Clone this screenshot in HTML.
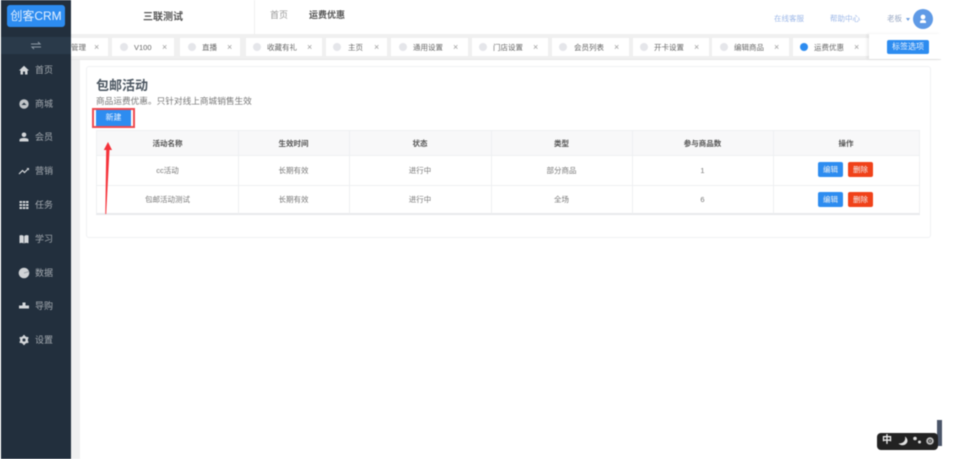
<!DOCTYPE html>
<html lang="zh"><head><meta charset="utf-8"><style>
html,body{margin:0;padding:0;background:#fff}
#p{position:relative;width:954px;height:459px;overflow:hidden;background:#fff;font-family:"Liberation Sans","Noto Sans CJK SC",sans-serif;filter:blur(.45px)}
#p div,#p span.a,#p svg{position:absolute}
.t{white-space:nowrap;line-height:1}
.tab{top:38px;height:18px;background:#fff}
.tab .l{top:5px;font-size:7.5px;color:#666;white-space:nowrap;line-height:9px}
.tab .d{top:5px;width:8px;height:8px;border-radius:50%;background:#e5e6ea}
.tab .x{top:4px;font-size:9px;color:#9a9a9a;line-height:10px}
.m{left:35px;font-size:9px;color:#a5abb1;line-height:10px;white-space:nowrap}
.c{font-size:7.5px;color:#777;text-align:center;line-height:8px;white-space:nowrap}
.h{font-size:7.5px;color:#555;font-weight:bold;text-align:center;line-height:8px;white-space:nowrap;top:140px}
.v{width:1px;top:130px;height:84px;background:#eef0f2}
.b{width:25px;height:15px;border-radius:2px;color:#f3f3f3;font-size:7.5px;line-height:15px;text-align:center}
</style></head><body><div id="p">
<!-- backgrounds -->
<div style="left:71px;top:60px;width:9px;height:399px;background:#f0f0f0"></div>
<div style="left:0;top:0;width:1px;height:459px;background:#fff"></div>
<div style="left:71px;top:34px;width:870px;height:26px;background:#f0f0f0"></div>
<div style="left:71px;top:59px;width:870px;height:1px;background:#e8e8e8"></div>
<!-- top bar -->
<div style="left:254px;top:0;width:1px;height:34px;background:#efefef"></div>
<div class="t" style="left:143px;top:13px;font-size:10px;font-weight:bold;color:#555">三联测试</div>
<div class="t" style="left:270px;top:11px;font-size:9px;color:#999">首页</div>
<div class="t" style="left:309px;top:11px;font-size:9px;font-weight:bold;color:#555">运费优惠</div>
<div class="t" style="left:774px;top:15px;font-size:7.5px;color:#9db8e8">在线客服</div>
<div class="t" style="left:830px;top:15px;font-size:7.5px;color:#9db8e8">帮助中心</div>
<div class="t" style="left:887px;top:15px;font-size:7.5px;color:#9aa9c4">老板</div>
<div style="left:906px;top:18px;width:0;height:0;border:2px solid transparent;border-top:3px solid #6f9fe0"></div>
<div style="left:913px;top:9px;width:20px;height:20px;border-radius:50%;background:#5f9ae6"></div>
<svg style="left:918px;top:14px" width="10" height="10" viewBox="0 0 10 10"><circle cx="5" cy="3" r="2.4" fill="#fff"/><path d="M2 9V8C2 6.500 3 6 5 6s3 .5 3 2v1z" fill="#fff"/></svg>
<!-- tabs -->
<div class="tab" style="left:71px;width:37px"><span class="a l" style="left:0">管理</span><span class="a x" style="left:23px">×</span></div>
<div class="tab" style="left:112px;width:62px"><span class="a d" style="left:8px"></span><span class="a l" style="left:22px">V100</span><span class="a x" style="left:50px">×</span></div>
<div class="tab" style="left:180px;width:60px"><span class="a d" style="left:8px"></span><span class="a l" style="left:22px">直播</span><span class="a x" style="left:47px">×</span></div>
<div class="tab" style="left:246px;width:76px"><span class="a d" style="left:7px"></span><span class="a l" style="left:21px">收藏有礼</span><span class="a x" style="left:61px">×</span></div>
<div class="tab" style="left:326px;width:61px"><span class="a d" style="left:7px"></span><span class="a l" style="left:22px">主页</span><span class="a x" style="left:48px">×</span></div>
<div class="tab" style="left:391px;width:77px"><span class="a d" style="left:8px"></span><span class="a l" style="left:22px">通用设置</span><span class="a x" style="left:62px">×</span></div>
<div class="tab" style="left:472px;width:76px"><span class="a d" style="left:7px"></span><span class="a l" style="left:21px">门店设置</span><span class="a x" style="left:61px">×</span></div>
<div class="tab" style="left:552px;width:77px"><span class="a d" style="left:7px"></span><span class="a l" style="left:22px">会员列表</span><span class="a x" style="left:62px">×</span></div>
<div class="tab" style="left:633px;width:76px"><span class="a d" style="left:7px"></span><span class="a l" style="left:21px">开卡设置</span><span class="a x" style="left:61px">×</span></div>
<div class="tab" style="left:712px;width:77px"><span class="a d" style="left:8px"></span><span class="a l" style="left:22px">编辑商品</span><span class="a x" style="left:62px">×</span></div>
<div class="tab" style="left:793px;width:76px"><span class="a d" style="left:7px;background:#2d8cf0"></span><span class="a l" style="left:21px">运费优惠</span><span class="a x" style="left:61px">×</span></div>
<div style="left:869px;top:34px;width:72px;height:25px;background:#fff;box-shadow:-2px 0 3px rgba(0,0,0,.08)"></div>
<div style="left:887px;top:40px;width:42px;height:14px;background:#2d8cf0;border-radius:2px;color:#e8f2ff;font-size:8px;line-height:14px;text-align:center">标签选项</div>
<!-- card -->
<div style="left:86px;top:66px;width:843px;height:170px;border:1px solid #f0f1f3;border-radius:3px;background:#fff"></div>
<div class="t" style="left:96px;top:79px;font-size:13px;font-weight:bold;color:#4a5560">包邮活动</div>
<div class="t" style="left:96px;top:97px;font-size:8.67px;color:#777">商品运费优惠。只针对线上商城销售生效</div>
<div style="left:96px;top:109px;width:35px;height:18px;background:#2d8cf0;border-radius:1px;color:#eaf3ff;font-size:8px;line-height:18px;text-align:center">新建</div>
<div style="left:92px;top:108px;width:39px;height:16px;border:2px solid #ee4b50;box-sizing:content-box"></div>
<!-- table -->
<div style="left:96px;top:130px;width:824px;height:85px;border:1px solid #eef0f2;border-bottom:2px solid #e8e9ec;box-sizing:border-box"></div>
<div style="left:97px;top:131px;width:822px;height:24px;background:#f8f8f9"></div>
<div style="left:97px;top:155px;width:822px;height:1px;background:#eef0f2"></div>
<div style="left:97px;top:185px;width:822px;height:1px;background:#eef0f2"></div>
<div class="v" style="left:238px"></div><div class="v" style="left:349px"></div><div class="v" style="left:491px"></div><div class="v" style="left:632px"></div><div class="v" style="left:773px"></div>
<div class="h" style="left:97px;width:141px">活动名称</div>
<div class="h" style="left:238px;width:111px">生效时间</div>
<div class="h" style="left:349px;width:142px">状态</div>
<div class="h" style="left:491px;width:141px">类型</div>
<div class="h" style="left:632px;width:141px">参与商品数</div>
<div class="h" style="left:773px;width:146px">操作</div>
<div class="c" style="left:97px;width:141px;top:167px">cc活动</div>
<div class="c" style="left:238px;width:111px;top:167px">长期有效</div>
<div class="c" style="left:349px;width:142px;top:167px">进行中</div>
<div class="c" style="left:491px;width:141px;top:167px">部分商品</div>
<div class="c" style="left:632px;width:141px;top:167px">1</div>
<div class="c" style="left:97px;width:141px;top:196px">包邮活动测试</div>
<div class="c" style="left:238px;width:111px;top:196px">长期有效</div>
<div class="c" style="left:349px;width:142px;top:196px">进行中</div>
<div class="c" style="left:491px;width:141px;top:196px">全场</div>
<div class="c" style="left:632px;width:141px;top:196px">6</div>
<div class="b" style="left:818px;top:162px;background:#2d8cf0">编辑</div>
<div class="b" style="left:848px;top:162px;background:#f0421a">删除</div>
<div class="b" style="left:818px;top:192px;background:#2d8cf0">编辑</div>
<div class="b" style="left:848px;top:192px;background:#f0421a">删除</div>
<!-- arrow -->
<svg style="left:100px;top:140px" width="16" height="76" viewBox="0 0 16 76"><path d="M5.300 74L6.200 10H3.800L8 2 12 10H9.500L6.200 74z" fill="#f5323a"/></svg>
<!-- sidebar -->
<div style="left:1px;top:0;width:70px;height:459px;background:#222f3d"></div>
<div style="left:1px;top:37px;width:70px;height:17px;background:#2a3a4a"></div>
<div style="left:7px;top:5px;width:58px;height:22px;background:#2d8cf0;border-radius:3px;color:#e4f0ff;font-size:12px;line-height:22px;text-align:center">创客CRM</div>
<svg style="left:30px;top:41px" width="12" height="9" viewBox="0 0 12 9"><path d="M1 3H10L8 1M11 6H2L4 8" fill="none" stroke="#8c98a4" stroke-width="1"/></svg>
<svg style="left:19px;top:65px" width="10" height="10" viewBox="0 0 10 10"><path d="M5 .8L10 5.500H8.500V9.500H6V6.500H4V9.500H1.500V5.500H0z" fill="#d4d7da"/></svg>
<div class="m" style="top:65px">首页</div>
<svg style="left:19px;top:99px" width="10" height="10" viewBox="0 0 10 10"><circle cx="5" cy="5" r="4.700" fill="#c0c4c8"/><path d="M2.500 6L5 3.500 7.500 6z" fill="#2b3845"/></svg>
<div class="m" style="top:99px">商城</div>
<svg style="left:19px;top:132px" width="10" height="10" viewBox="0 0 10 10"><circle cx="5" cy="2.800" r="2.300" fill="#d4d7da"/><path d="M.5 9.500V8C.5 6.500 2.500 6 5 6s4.500.5 4.500 2v1.500z" fill="#d4d7da"/></svg>
<div class="m" style="top:132px">会员</div>
<svg style="left:18px;top:166px" width="12" height="10" viewBox="0 0 12 10"><path d="M1 8L4.500 4.500 6.500 6.500 10.500 2.500" fill="none" stroke="#d4d7da" stroke-width="1.200"/><path d="M8.500 2H11V4.500z" fill="#d4d7da"/></svg>
<div class="m" style="top:166px">营销</div>
<svg style="left:19px;top:200px" width="10" height="10" viewBox="0 0 10 10"><path d="M.5 1h2.500v2H.5zM3.800 1h2.500v2H3.800zM7 1h2.500v2H7zM.5 4h2.500v2H.5zM3.800 4h2.500v2H3.800zM7 4h2.500v2H7zM.5 7h2.500v2H.5zM3.800 7h2.500v2H3.800zM7 7h2.500v2H7z" fill="#d4d7da"/></svg>
<div class="m" style="top:200px">任务</div>
<svg style="left:19px;top:234px" width="10" height="10" viewBox="0 0 10 10"><path d="M.5 1.500C2 1 3.500 1 4.700 2V9.500C3.500 8.700 2 8.700.5 9.200zM9.500 1.500C8 1 6.500 1 5.300 2V9.500C6.500 8.700 8 8.700 9.500 9.200z" fill="#d4d7da"/></svg>
<div class="m" style="top:234px">学习</div>
<svg style="left:18px;top:267px" width="12" height="12" viewBox="0 0 12 12"><circle cx="6" cy="6" r="5.300" fill="#d0d3d6"/><path d="M6 6L11 4.500" stroke="#9aa1a8" fill="none"/></svg>
<div class="m" style="top:268px">数据</div>
<svg style="left:18px;top:301px" width="12" height="10" viewBox="0 0 12 10"><path d="M4.500 1.500h3V4.500h3.500V7.500H1V4.500h3.500z" fill="#d4d7da"/></svg>
<div class="m" style="top:301px">导购</div>
<svg style="left:19px;top:335px" width="10" height="10" viewBox="0 0 10 10"><circle cx="5" cy="5" r="3" fill="none" stroke="#d4d7da" stroke-width="2"/><path d="M5 0V10M.7 2.500L9.300 7.500M.7 7.500L9.300 2.500" stroke="#d4d7da" stroke-width="1.600"/><circle cx="5" cy="5" r="1.500" fill="#222f3d"/></svg>
<div class="m" style="top:335px">设置</div>
<!-- ime widget -->
<div style="left:937px;top:420px;width:5px;height:26px;background:#4a5568"></div>
<div style="left:877px;top:433px;width:61px;height:17px;border-radius:4px;background:#222"></div>
<div class="t" style="left:882px;top:436px;font-size:10px;font-weight:bold;color:#eee">中</div>
<svg style="left:897px;top:435px" width="42" height="13" viewBox="0 0 42 13"><path d="M8 1.500C9 5.500 6.500 8.500 1.500 8.500C4 11.500 10 10.500 10.500 6C10.500 4 9.500 2.500 8 1.500z" fill="#e2e2e2"/><circle cx="18" cy="3.500" r="1.800" fill="#ddd"/><circle cx="22.500" cy="7" r="1.500" fill="#ddd"/><circle cx="33" cy="6" r="2.800" fill="none" stroke="#bbb" stroke-width="2"/><circle cx="33" cy="6" r="1" fill="#bbb"/></svg>
</div></body></html>
